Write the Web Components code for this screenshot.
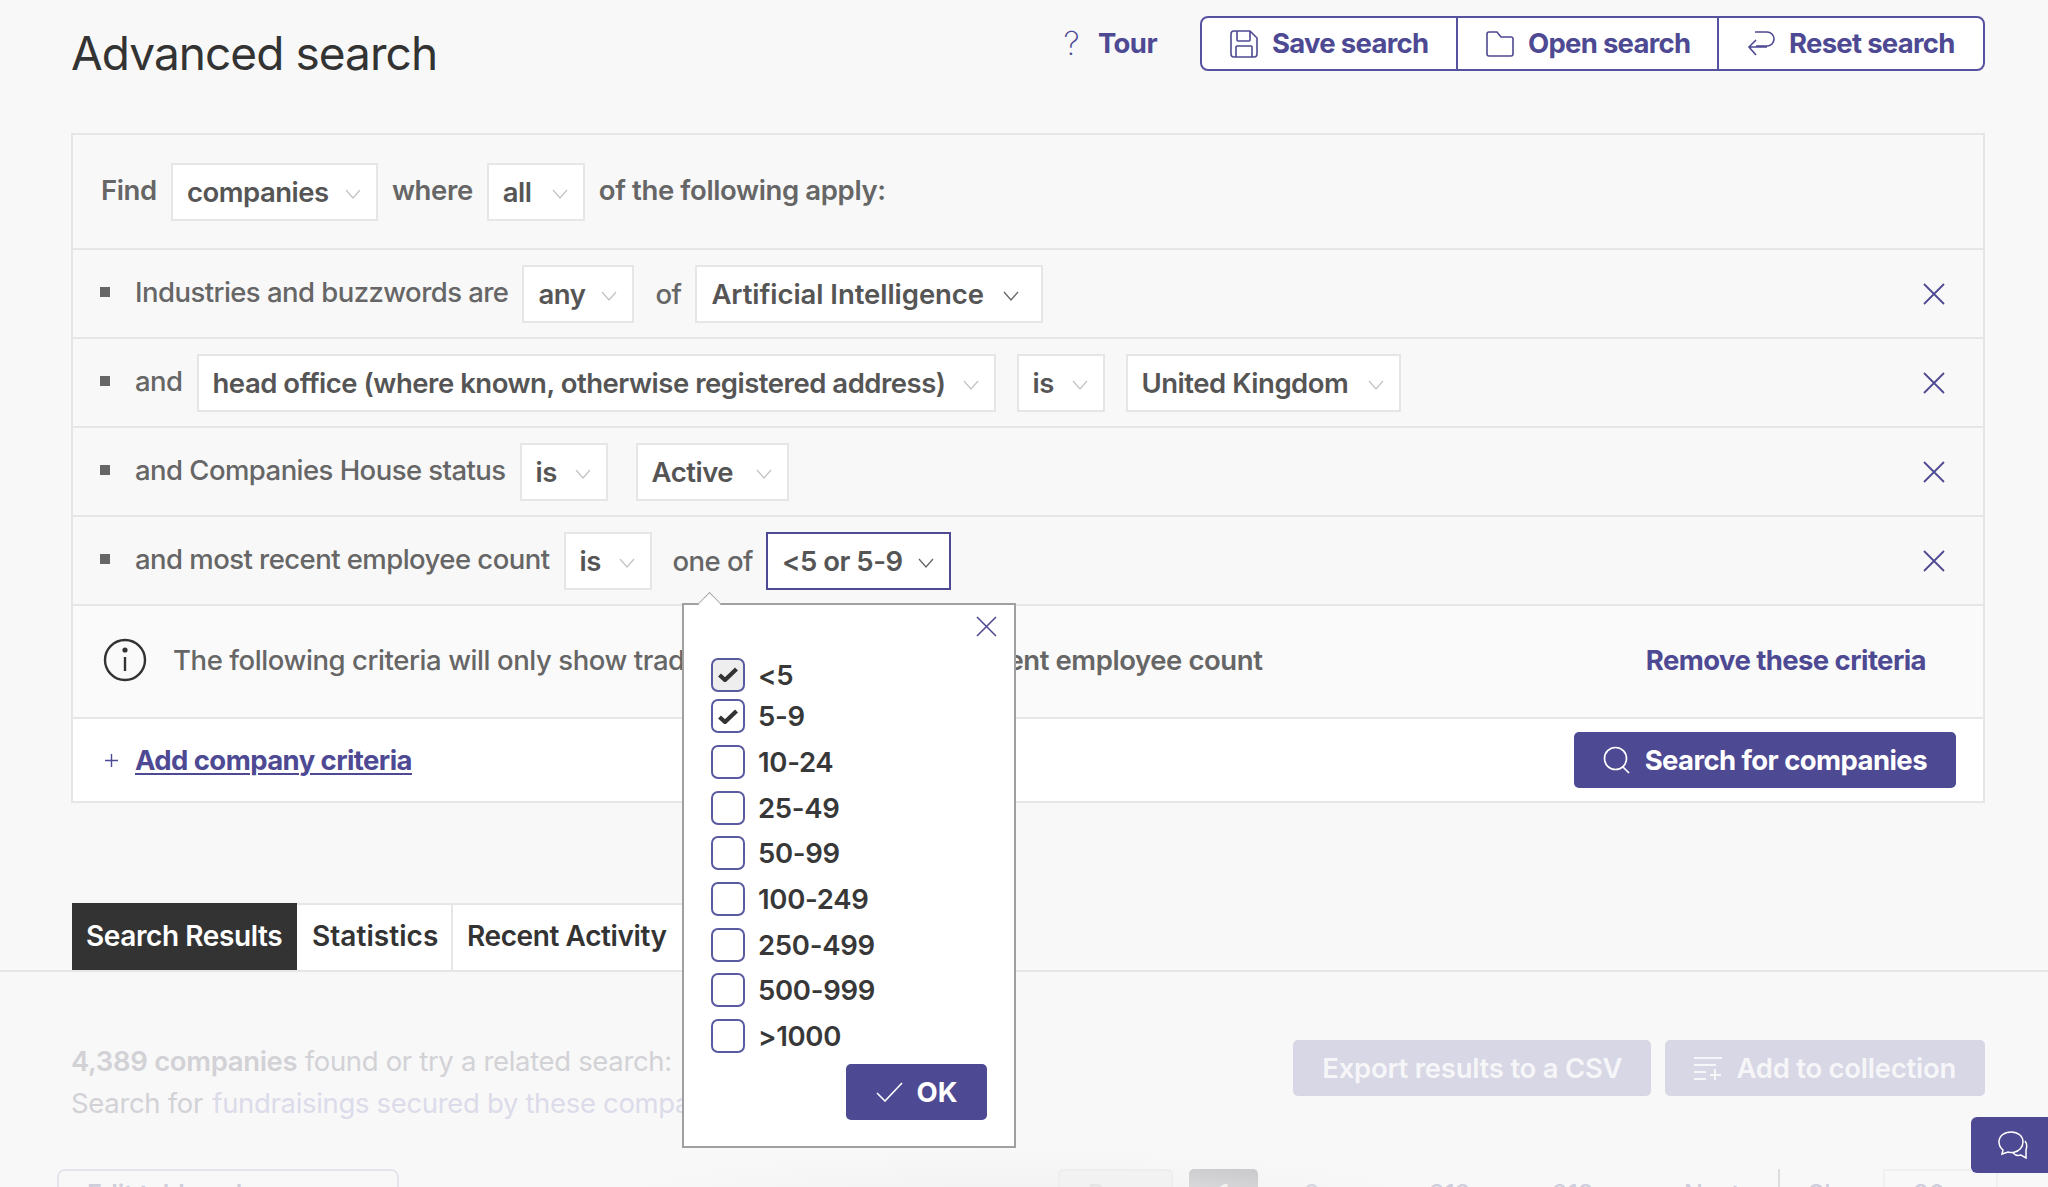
<!DOCTYPE html>
<html>
<head>
<meta charset="UTF-8" />
<title>Advanced search</title>
<style>
  html, body { margin: 0; height: 100%; overflow: hidden; background: #f8f8f8; }
  body { font-family: Inter, "Liberation Sans", sans-serif; color: #333; }
</style>
</head>
<body>
<search-page></search-page>

<template id="select-tpl">
  <style>
    :host { display: inline-flex; align-items: center; justify-content: space-between; box-sizing: border-box;
      height: 58px; padding: 0 15px 0 14px; background: #fff; border: 2px solid #e6e6e6; margin-bottom: -3px;
      font: 600 27.5px Inter, sans-serif; color: #555; white-space: nowrap; letter-spacing: -0.48px; }
    :host([open]) { border-color: #4e4993; }
    svg { width: 16px; height: 10px; margin-top: 5px; fill: none; stroke: #c4c4c4; stroke-width: 1.3; flex: none; }
    :host([dark]) svg, :host([open]) svg { stroke: #666; }
  </style>
  <slot></slot>
  <svg viewBox="0 0 16 10"><path d="M1 1l7 8 7-8"/></svg>
</template>

<template id="row-tpl">
  <style>
    :host { display: flex; align-items: center; box-sizing: border-box; height: 89px; padding: 0 27px 0 27px;
      border-top: 2px solid #e6e6e6; font: 500 27.5px Inter, sans-serif; color: #666; letter-spacing: -0.55px; }
    i { width: 10px; height: 10px; background: #666; flex: none; margin-right: 25px; margin-top: -4px; }
    .body { display: flex; align-items: center; gap: 14px; flex: 1; white-space: nowrap; padding-bottom: 3px; }
    svg { width: 22px; height: 22px; margin-right: 11px; fill: none; stroke: #4e4993; stroke-width: 1.8; }
  </style>
  <i></i>
  <div class="body"><slot></slot></div>
  <svg viewBox="0 0 22 22"><path d="M1 1l20 20M21 1L1 21"/></svg>
</template>

<template id="check-tpl">
  <style>
    :host { display: flex; align-items: center; gap: 13px; height: 35px; margin-bottom: 10.7px;
      font: 600 27.5px Inter, sans-serif; color: #383838; letter-spacing: -0.3px; }
    b { box-sizing: border-box; width: 34px; height: 34px; border: 2px solid #5a5aa0; border-radius: 7px; background: #fff;
      display: flex; align-items: center; justify-content: center; flex: none; }
    :host([focus]) b { background: #eee; }
    svg { width: 20px; height: 15px; display: none; }
    :host([checked]) svg { display: block; }
  </style>
  <b><svg viewBox="0 0 20 15"><path d="M1.5 8l5.5 5L18.500 2" fill="none" stroke="#333" stroke-width="4.200"/></svg></b>
  <span><slot></slot></span>
</template>

<script>
  // small helper so each element is just a template plus a shadow root
  function fromTemplate(id) {
    return class extends HTMLElement {
      constructor() {
        super();
        const root = this.attachShadow({ mode: "open" });
        root.appendChild(document.getElementById(id).content.cloneNode(true));
      }
    };
  }
  customElements.define("select-box", fromTemplate("select-tpl"));
  customElements.define("criteria-row", fromTemplate("row-tpl"));
  customElements.define("check-item", fromTemplate("check-tpl"));

  class HeaderBar extends HTMLElement {
    constructor() {
      super();
      this.attachShadow({ mode: "open" }).innerHTML = `
      <style>
        :host { display: flex; align-items: flex-start; justify-content: space-between; height: 133px; padding: 0 63px 0 71px;
          box-sizing: border-box; font-family: Inter, sans-serif; }
        h1 { margin: 26px 0 0; font: 400 46px/54px Inter, sans-serif; color: #333; letter-spacing: -0.95px; }
        .right { display: flex; align-items: center; margin-top: 16px; }
        .tour { display: flex; align-items: center; gap: 19px; font: 700 27.5px Inter, sans-serif; color: #4e4993; margin-right: 43px; letter-spacing: -0.6px; margin-top: -2px; }
        .tour span { font-weight: 200; font-size: 33px; }
        .group { display: flex; height: 55px; border: 2px solid #5652a0; border-radius: 8px; background: #fff; box-sizing: border-box; }
        .group div { display: flex; align-items: center; gap: 14px; padding: 0 0 0 28px; font: 700 27.5px Inter, sans-serif; color: #4e4993; border-left: 2px solid #5652a0; letter-spacing: -0.72px; box-sizing: border-box; white-space: nowrap; padding-bottom: 2px; }
        .group div:first-child { border-left: 0; }
        svg { fill: none; stroke: #4e4993; stroke-width: 1.6; flex: none; margin-top: 2px; }
      </style>
      <h1>Advanced search</h1>
      <div class="right">
        <div class="tour"><span>?</span>Tour</div>
        <div class="group">
          <div style="width:254px"><svg width="28" height="28" viewBox="0 0 28 28"><path d="M4 1h16l7 7v16a3 3 0 0 1-3 3H4a3 3 0 0 1-3-3V4a3 3 0 0 1 3-3zM7 1v9a1 1 0 0 0 1 1h11a1 1 0 0 0 1-1V1M6 27V17a1 1 0 0 1 1-1h14a1 1 0 0 1 1 1v10"/></svg>Save search</div>
          <div style="width:261px"><svg width="28" height="26" viewBox="0 0 28 26"><path d="M1 3a2 2 0 0 1 2-2h8l4 5h10a2 2 0 0 1 2 2v15a2 2 0 0 1-2 2H3a2 2 0 0 1-2-2z"/></svg>Open search</div>
          <div style="width:266px"><svg width="28" height="26" viewBox="0 0 28 26"><path d="M9 15h11a7 7 0 0 0 0-14H8M9 9l-7 7 7 8M2 16h18"/></svg>Reset search</div>
        </div>
      </div>`;
    }
  }
  customElements.define("header-bar", HeaderBar);

  class CriteriaPanel extends HTMLElement {
    constructor() {
      super();
      this.attachShadow({ mode: "open" }).innerHTML = `
      <style>
        :host { display: block; margin: 0 63px 0 71px; border: 2px solid #e6e6e6; font-family: Inter, sans-serif; box-sizing: border-box; }
        .find { display: flex; align-items: center; gap: 14px; height: 113px; padding: 0 27px 3px 28px; box-sizing: border-box; font: 600 27.5px Inter, sans-serif; color: #666; letter-spacing: -0.37px; }
        .note { display: flex; align-items: center; height: 113px; box-sizing: border-box; border-top: 2px solid #e6e6e6; padding: 0 57px 3px 30px;
          background: #fafafa; font: 500 27.5px Inter, sans-serif; color: #666; letter-spacing: -0.42px; }
        .note p { margin: 0 0 0 26px; flex: 1; white-space: nowrap; font-weight: 500; }
        .note p b { font-weight: 600; margin-left: 27px; }
        .note a { font-weight: 700; color: #4e4993; letter-spacing: -0.58px; }
        .add { display: flex; align-items: center; justify-content: space-between; height: 84px; box-sizing: border-box; border-top: 2px solid #e6e6e6; padding: 0 27px 0 32px;
          background: #fff; font: 700 27.5px Inter, sans-serif; color: #4e4993; letter-spacing: -0.58px; }
        .add span { display: flex; align-items: center; gap: 17px; }
        .add u { text-decoration-thickness: 2px; text-underline-offset: 3px; }
        .btn { display: flex; align-items: center; gap: 14px; height: 56px; padding: 0 29px; background: #4e4993; color: #fff; border-radius: 5px; letter-spacing: -0.58px; }
        .mid { padding-top: 3px; }
      </style>
      <div class="find">Find <select-box style="width:207px">companies</select-box> where <select-box style="width:98px">all</select-box> of the following apply:</div>
      <criteria-row>Industries and buzzwords are <select-box style="width:112px">any</select-box><span class="mid" style="margin:0 0 0 7px">of</span><select-box style="width:348px;padding-right:22px;letter-spacing:-.05px" dark>Artificial Intelligence</select-box></criteria-row>
      <criteria-row>and <select-box style="width:799px">head office (where known, otherwise registered address)</select-box><select-box style="width:88px;margin-left:7px">is</select-box><select-box style="width:275px;margin-left:7px">United Kingdom</select-box></criteria-row>
      <criteria-row>and Companies House status <select-box style="width:88px">is</select-box><select-box style="width:153px;margin-left:14px">Active</select-box></criteria-row>
      <criteria-row>and most recent employee count <select-box style="width:88px">is</select-box><span class="mid" style="margin:0 -1px 0 7px">one of</span><select-box style="width:185px" open>&lt;5 or 5-9</select-box></criteria-row>
      <div class="note">
        <svg width="44" height="44" viewBox="0 0 44 44" fill="none" stroke="#333" stroke-width="2.4"><circle cx="22" cy="22" r="20"/><path d="M22 19v14"/><circle cx="22" cy="12" r="1.4" fill="#333"/></svg>
        <p>The following criteria will only show trading companies with <b>recent employee count</b></p>
        <a>Remove these criteria</a>
      </div>
      <div class="add">
        <span><svg width="13" height="13" viewBox="0 0 13 13" fill="none" stroke="#4e4993" stroke-width="1.4"><path d="M6.500 0v13M0 6.500h13"/></svg><u>Add company criteria</u></span>
        <div class="btn"><svg width="28" height="28" viewBox="0 0 28 28" fill="none" stroke="#fff" stroke-width="1.7"><circle cx="12.5" cy="12.5" r="11"/><path d="M20 21l6 6"/></svg>Search for companies</div>
      </div>`;
    }
  }
  customElements.define("criteria-panel", CriteriaPanel);

  class ResultsArea extends HTMLElement {
    constructor() {
      super();
      this.attachShadow({ mode: "open" }).innerHTML = `
      <style>
        :host { display: block; margin-top: 100px; font-family: Inter, sans-serif; }
        .tabs { display: flex; padding-left: 72px; border-bottom: 2px solid #e6e6e6; height: 69px; box-sizing: border-box; }
        .tabs div { display: flex; align-items: center; padding: 0 14px 3px; background: #fff; font: 600 28px Inter, sans-serif; color: #333; border-right: 2px solid #e6e6e6; letter-spacing: -0.4px; border-top: 2px solid #e6e6e6; box-sizing: border-box; white-space: nowrap; }
        .tabs div.on { background: #333; color: #fff; border-color: #333; }
        .head { display: flex; justify-content: space-between; padding: 68px 38px 0 71px; height: 197px; box-sizing: border-box; }
        .txt { font: 400 27.5px/42px Inter, sans-serif; color: #d2d2d6; letter-spacing: -0.33px; white-space: nowrap; }
        .txt b { font-weight: 600; }
        .txt a { color: #dcdbea; margin-left: 2px; }
        .acts { display: flex; gap: 14px; margin: 0 25px 0 0; }
        .acts div { display: flex; align-items: center; gap: 14px; height: 56px; padding: 0 29px; background: #d8d7e5; color: #f6f6f8; border-radius: 5px; font: 600 27.5px Inter, sans-serif; letter-spacing: -0.25px; white-space: nowrap; }
        .tools { display: flex; align-items: flex-start; height: 60px; padding-left: 57px; font: 500 25px Inter, sans-serif; color: #cfcfdc; }
        .edit { box-sizing: border-box; width: 342px; height: 56px; border: 2px solid #e4e3ee; border-radius: 8px; padding: 8px 28px; font-weight: 600; margin-right: 659px; }
        .prev { box-sizing: border-box; width: 115px; height: 56px; border: 2px solid #ededed; border-radius: 5px; padding: 8px 0 0 28px; color: #d8d8d8; margin-right: 16px; background: #f4f4f4; }
        .cur { box-sizing: border-box; width: 69px; height: 56px; background: #c4c4c8; color: #f4f4f4; border-radius: 5px; padding: 10px 0 0 30px; margin-right: 46px; }
        .p { padding-top: 10px; }
        .box { box-sizing: border-box; width: 115px; height: 56px; border: 2px solid #f0f0f0; padding: 8px 0 0 28px; }
      </style>
      <div class="tabs"><div class="on" style="width:225px">Search Results</div><div style="width:156px;padding-left:15px;letter-spacing:.05px">Statistics</div><div style="width:240px">Recent Activity</div></div>
      <div class="head">
        <div class="txt"><b>4,389 companies</b> found or try a related search:<br>Search for <a>fundraisings secured by these companies</a></div>
        <div class="acts"><div>Export results to a CSV</div><div><svg width="28" height="24" viewBox="0 0 28 24" fill="none" stroke="#f6f6f8" stroke-width="2"><path d="M0 2h28M0 9h22M0 16h12M0 23h12M21 13v11M16 19h11"/></svg>Add to collection</div></div>
      </div>
      <div class="tools">
        <div class="edit">Edit table columns</div>
        <div class="prev">Prev</div><div class="cur">1</div>
        <div class="p" style="width:125px">2</div><div class="p" style="width:123px">212</div><div class="p" style="width:132px">213</div>
        <div class="p" style="width:96px;height:50px;box-sizing:border-box;border-right:2px solid #ddd">Next</div><div class="p" style="width:103px;padding-left:28px;box-sizing:border-box">Show</div>
        <div class="box">30</div>
      </div>`;
    }
  }
  customElements.define("results-area", ResultsArea);

  class EmployeePopup extends HTMLElement {
    constructor() {
      super();
      this.attachShadow({ mode: "open" }).innerHTML = `
      <style>
        :host { position: absolute; left: 682px; top: 603px; width: 334px; height: 545px; box-sizing: border-box; background: #fff; border: 2px solid #a0a0a0; padding: 52px 27px 0 27px; font-family: Inter, sans-serif; }
        .tip { position: absolute; left: 16px; top: -11px; width: 18px; height: 18px; background: #fff; border-left: 1.5px solid #a0a0a0; border-top: 1.5px solid #a0a0a0; transform: rotate(45deg) scale(.85); }
        .x { position: absolute; right: 17px; top: 11px; width: 21px; height: 21px; fill: none; stroke: #4e4993; stroke-width: 1.6; }
        .ok { position: absolute; right: 27px; top: 459px; width: 141px; height: 56px; background: #4e4993; color: #fff; border-radius: 5px; display: flex; align-items: center; justify-content: center; gap: 14px; font: 700 27.5px Inter, sans-serif; }
      </style>
      <div class="tip"></div>
      <svg class="x" viewBox="0 0 21 21"><path d="M1 1l19 19M20 1L1 20"/></svg>
      <check-item checked focus>&lt;5</check-item>
      <check-item checked style="margin-top:-4px">5-9</check-item>
      <check-item>10-24</check-item>
      <check-item>25-49</check-item>
      <check-item>50-99</check-item>
      <check-item>100-249</check-item>
      <check-item>250-499</check-item>
      <check-item>500-999</check-item>
      <check-item>&gt;1000</check-item>
      <div class="ok"><svg width="27" height="20" viewBox="0 0 27 20" fill="none" stroke="#fff" stroke-width="1.6"><path d="M1 11l8 8L26 1"/></svg>OK</div>`;
    }
  }
  customElements.define("employee-popup", EmployeePopup);

  class ChatTab extends HTMLElement {
    constructor() {
      super();
      this.attachShadow({ mode: "open" }).innerHTML = `
      <style>
        :host { position: absolute; right: 0; top: 1117px; width: 77px; height: 56px; box-sizing: border-box; padding-left: 7px; background: #4e4993; border-radius: 6px 0 0 6px; display: flex; align-items: center; justify-content: center; }
      </style>
      <svg width="30" height="28" viewBox="0 0 30 28" fill="none" stroke="#fff" stroke-width="1.5"><path d="M13 1C6 1 1 5 1 11c0 3.500 1.500 6 4 8l-1 4 6-2c2 .6 4 .8 6 .3 5-1 9-5 9-10.300C25 5 20 1 13 1z"/><path d="M27 10c2 2.500 2 6 1 9v8l-5-3c-3 1-6 0-8-2"/></svg>`;
    }
  }
  customElements.define("chat-tab", ChatTab);

  class SearchPage extends HTMLElement {
    constructor() {
      super();
      this.attachShadow({ mode: "open" }).innerHTML = `
      <style>
        :host { display: block; position: relative; height: 1187px; overflow: hidden; background: #f8f8f8; }
        .shade { position: absolute; left: 590px; right: 600px; top: 1150px; height: 60px; background: radial-gradient(ellipse at 50% 100%, #f0f0f0, rgba(240,240,240,0) 72%); pointer-events: none; }
      </style>
      <header-bar></header-bar>
      <criteria-panel></criteria-panel>
      <results-area></results-area>
      <div class="shade"></div>
      <employee-popup></employee-popup>
      <chat-tab></chat-tab>`;
    }
  }
  customElements.define("search-page", SearchPage);
</script>
</body>
</html>
